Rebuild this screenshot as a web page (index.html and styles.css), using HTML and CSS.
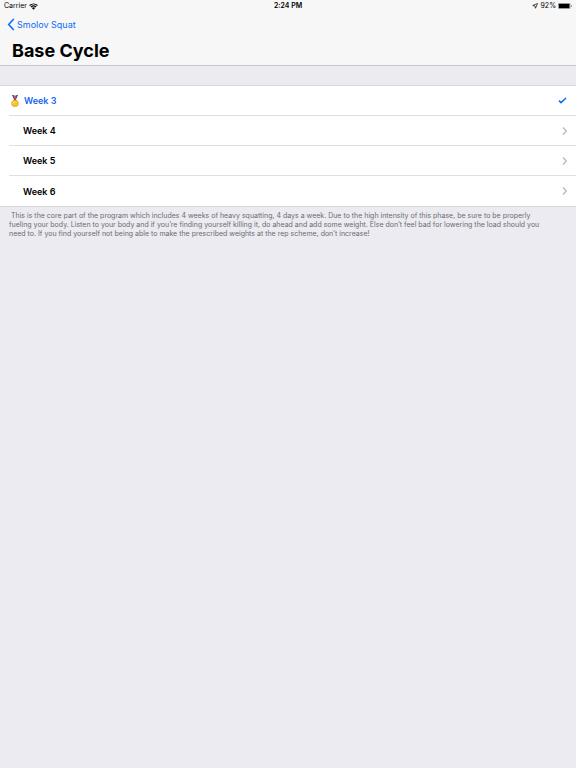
FILE: index.html
```
<!DOCTYPE html>
<html lang="en">
<head>
<meta charset="utf-8">
<meta name="viewport" content="width=device-width, initial-scale=1">
<title>Base Cycle</title>
<link rel="stylesheet" href="styles.css">
</head>
<body>
<header class="header">
  <div class="status">
    <div class="status-left">
      <span>Carrier</span>
      <svg class="wifi" viewBox="0 0 16 12" aria-hidden="true"><path d="M1 4.2a10.4 10.4 0 0 1 14 0M3.4 6.9a6.8 6.8 0 0 1 9.2 0" fill="none" stroke="#000" stroke-width="2"/><path d="M5.2 8.8a4.2 4.2 0 0 1 5.6 0L8 11.8z"/></svg>
    </div>
    <span class="time">2:24 PM</span>
    <div class="status-right">
      <svg class="location" viewBox="0 0 12 12" aria-hidden="true"><path d="M11 1 7 10.500 6 6 1.500 5z" fill="none" stroke="#111" stroke-width="1.500"/></svg>
      <span>92%</span>
      <svg class="battery" viewBox="0 0 28 12" aria-hidden="true"><rect x=".5" y=".5" width="24" height="11" rx="2.5" fill="none" stroke="#777"/><rect x="1.500" y="1.500" width="21.500" height="9" rx="1"/><path d="M26 4v4q1.500-.5 1.500-2T26 4z" fill="#555"/></svg>
    </div>
  </div>
  <nav><a class="back" href="#"><svg class="back-icon" viewBox="0 0 8 14" aria-hidden="true"><path d="M7 1 1.500 7 7 13" fill="none" stroke="#0b6cfb" stroke-width="1.700"/></svg><span>Smolov Squat</span></a></nav>
  <h1>Base Cycle</h1>
</header>
<main>
  <ul class="weeks">
    <li><a class="week current" href="#"><svg class="medal" viewBox="0 0 20 24" aria-hidden="true"><path d="M4 0h4l4 9-3 2z" fill="#34458f"/><path d="M16 0h-4L8 9l3 2z" fill="#34458f"/><path d="M6 0h2l4 8-2 2zM14 0h-2l-2 4 1 3z" fill="#d64c61"/><rect x="7" y="9" width="6" height="4" rx="1" fill="#a86a18"/><ellipse cx="10" cy="17" rx="7" ry="6.500" fill="#f2c52a" stroke="#cf991d"/><path d="M6.500 17q0-4 4-4" fill="none" stroke="#fff0a0" stroke-width="2"/></svg><span>Week 3</span><svg class="check" viewBox="0 0 9 7" aria-hidden="true"><path d="M1 3.600 3 5.600 8 1" fill="none" stroke="#0b6cfb" stroke-width="1.500"/></svg></a></li>
    <li><a class="week" href="#"><span>Week 4</span><svg class="chevron" viewBox="0 0 5 8" aria-hidden="true"><path d="m1 .5 3.300 3.500L1 7.500"/></svg></a></li>
    <li><a class="week" href="#"><span>Week 5</span><svg class="chevron" viewBox="0 0 5 8" aria-hidden="true"><path d="m1 .5 3.300 3.500L1 7.500"/></svg></a></li>
    <li><a class="week" href="#"><span>Week 6</span><svg class="chevron" viewBox="0 0 5 8" aria-hidden="true"><path d="m1 .5 3.300 3.500L1 7.500"/></svg></a></li>
  </ul>
  <p class="note">&nbsp;This is the core part of the program which includes 4 weeks of heavy squatting, 4 days a week. Due to the high intensity of this phase, be sure to be properly fueling your body. Listen to your body and if you’re finding yourself killing it, do ahead and add some weight. Else don’t feel bad for lowering the load should you need to. If you find yourself not being able to make the prescribed weights at the rep scheme, don’t increase!</p>
</main>
</body>
</html>
```
FILE: styles.css
```
* { box-sizing: border-box; }
body {
  margin: 0;
  min-height: 100vh;
  background: #ebebf1;
  color: #000;
  font-family: Inter, "Liberation Sans", sans-serif;
}
a { color: inherit; text-decoration: none; }
svg { display: block; flex: none; }
.header { background: #f7f7f7; border-bottom: 1px solid #c5c5ca; }
.status {
  display: grid;
  grid-template-columns: 1fr auto 1fr;
  align-items: center;
  height: 12px;
  padding: 0 4px;
  font-size: 7px;
  line-height: 12px;
}
.status-left, .status-right { display: flex; align-items: center; gap: 2px; }
.status-right { justify-content: flex-end; }
.time { font-weight: 600; }
.wifi { width: 9px; height: 7px; }
.location { width: 6px; height: 6px; margin-right: 1px; }
.battery { width: 14px; height: 6px; }
nav { display: flex; }
.back {
  display: flex;
  align-items: center;
  gap: 2px;
  height: 24px;
  padding-left: 7px;
  color: #0b6cfb;
  font-size: 9px;
}
.back-icon { width: 8px; height: 13px; }
h1 {
  margin: 0;
  padding: 2px 12px;
  font-size: 18px;
  line-height: 25px;
  font-weight: 700;
}
.weeks {
  margin: 19px 0 0;
  padding: 0;
  list-style: none;
  background: #fff;
  border: solid #d8d8dc;
  border-width: 1px 0;
}
.week {
  display: flex;
  align-items: center;
  justify-content: space-between;
  height: 30px;
  margin-left: 9px;
  padding: 0 9px 0 14px;
  font-size: 9px;
  font-weight: 600;
}
li:not(:last-child) .week { border-bottom: 1px solid #dfdfe2; }
.current { justify-content: flex-start; gap: 3px; padding-left: 0; color: #1766f0; }
.medal { width: 12px; height: 12px; }
.check { width: 9px; height: 7px; margin-left: auto; }
.chevron { width: 5px; height: 8px; fill: none; stroke: #b8b8bd; stroke-width: 1.2; }
.note {
  margin: 0;
  padding: 4px 24px 0 9px;
  color: #6b6b70;
  font-size: 7px;
  line-height: 9px;
}
```
